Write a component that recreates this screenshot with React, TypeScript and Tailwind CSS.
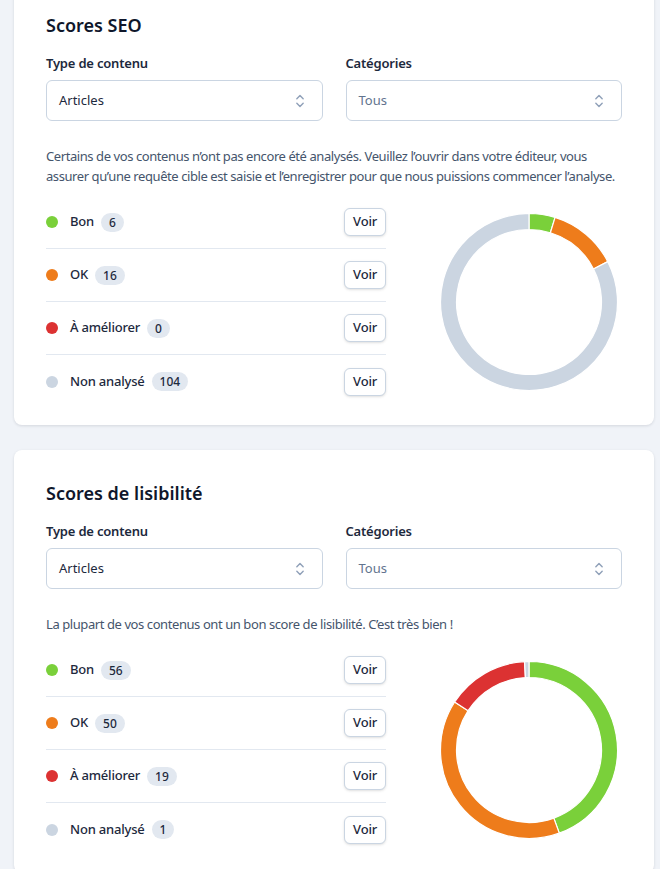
import React from "react";

type Row = { label: string; count: number; color: string };

const GREEN = "#7ad03a";
const ORANGE = "#ee7c1b";
const RED = "#dc3232";
const GRAY = "#cbd5e1";

function polar(cx: number, cy: number, r: number, deg: number) {
  const a = ((deg - 90) * Math.PI) / 180;
  return [cx + r * Math.cos(a), cy + r * Math.sin(a)];
}

function wedge(cx: number, cy: number, ro: number, ri: number, a0: number, a1: number) {
  const large = a1 - a0 > 180 ? 1 : 0;
  const [x0, y0] = polar(cx, cy, ro, a0);
  const [x1, y1] = polar(cx, cy, ro, a1);
  const [x2, y2] = polar(cx, cy, ri, a1);
  const [x3, y3] = polar(cx, cy, ri, a0);
  return `M${x0} ${y0} A${ro} ${ro} 0 ${large} 1 ${x1} ${y1} L${x2} ${y2} A${ri} ${ri} 0 ${large} 0 ${x3} ${y3} Z`;
}

function Donut({ rows }: { rows: Row[] }) {
  const total = rows.reduce((s, r) => s + r.count, 0);
  let start = 0;
  const size = 178;
  const c = size / 2;
  return (
    <svg width={size} height={size} viewBox={`0 0 ${size} ${size}`}>
      {rows.map((r) => {
        if (r.count === 0) return null;
        const sweep = (r.count / total) * 360;
        const a0 = start;
        const a1 = start + sweep;
        start = a1;
        return (
          <path
            key={r.label}
            d={wedge(c, c, 88.5, 72.5, a0, a1)}
            fill={r.color}
            stroke="#ffffff"
            strokeWidth={1.2}
          />
        );
      })}
    </svg>
  );
}

function UpDown() {
  return (
    <svg width="18" height="20" viewBox="0 0 20 20" fill="none" className="text-slate-400">
      <path
        d="M6.5 7.5L10 4l3.5 3.5M6.5 12.5L10 16l3.5-3.5"
        stroke="currentColor"
        strokeWidth="1.6"
        strokeLinecap="round"
        strokeLinejoin="round"
      />
    </svg>
  );
}

function SelectBox({ label, value, muted }: { label: string; value: string; muted?: boolean }) {
  return (
    <div className="flex flex-col">
      <span className="text-[13px] font-semibold text-slate-800 leading-5 mb-[7px] tracking-[-0.2px]">{label}</span>
      <div className="h-[41px] rounded-md border border-slate-300 bg-white flex items-center justify-between pl-3 pr-[13px]">
        <span className={`text-[13px] ${muted ? "text-slate-500" : "text-slate-800"}`}>{value}</span>
        <UpDown />
      </div>
    </div>
  );
}

function ScoreCard({ title, text, rows }: { title: string; text: string; rows: Row[] }) {
  return (
    <section className="bg-white rounded-lg shadow-[0_1px_3px_rgba(15,23,42,0.12)] px-8 pt-[31px] pb-[17px]">
      <h2 className="text-[18px] font-semibold text-slate-900 leading-6">{title}</h2>
      <div className="grid grid-cols-2 gap-[23px] mt-[16px]">
        <SelectBox label="Type de contenu" value="Articles" />
        <SelectBox label="Catégories" value="Tous" muted />
      </div>
      <p className="mt-[25px] text-[13px] leading-5 text-slate-600 tracking-[-0.42px]">{text}</p>
      <div className="flex items-center mt-[10px]">
        <ul className="w-[340px]">
          {rows.map((r, i) => (
            <li
              key={r.label}
              className={`flex items-center h-[53px] ${i < rows.length - 1 ? "border-b border-slate-200" : ""}`}
            >
              <span className="w-3 h-3 rounded-full shrink-0" style={{ backgroundColor: r.color }} />
              <span className="ml-3 text-[13px] font-medium text-slate-800 tracking-[-0.2px]">{r.label}</span>
              <span className="ml-[7px] px-2 rounded-full bg-slate-200 text-[12px] font-medium text-slate-800 leading-[19px]">
                {r.count}
              </span>
              <button className="ml-auto h-[28px] px-[8px] rounded-md border border-slate-300 bg-white text-[13px] font-medium text-slate-800 shadow-sm tracking-[-0.2px]">
                Voir
              </button>
            </li>
          ))}
        </ul>
        <div className="ml-[54px]">
          <Donut rows={rows} />
        </div>
      </div>
    </section>
  );
}

export default function App() {
  const seo: Row[] = [
    { label: "Bon", count: 6, color: GREEN },
    { label: "OK", count: 16, color: ORANGE },
    { label: "À améliorer", count: 0, color: RED },
    { label: "Non analysé", count: 104, color: GRAY },
  ];
  const read: Row[] = [
    { label: "Bon", count: 56, color: GREEN },
    { label: "OK", count: 50, color: ORANGE },
    { label: "À améliorer", count: 19, color: RED },
    { label: "Non analysé", count: 1, color: GRAY },
  ];
  return (
    <div
      className="min-h-screen bg-[#f0f3f8] pl-[14px] pr-[6px] overflow-hidden"
      style={{ fontFamily: '"Noto Sans", "Open Sans", sans-serif' }}
    >
      <div className="flex flex-col gap-[25px] -mt-[18px]">
        <ScoreCard
          title="Scores SEO"
          text="Certains de vos contenus n’ont pas encore été analysés. Veuillez l’ouvrir dans votre éditeur, vous assurer qu’une requête cible est saisie et l’enregistrer pour que nous puissions commencer l’analyse."
          rows={seo}
        />
        <ScoreCard
          title="Scores de lisibilité"
          text="La plupart de vos contenus ont un bon score de lisibilité. C’est très bien !"
          rows={read}
        />
      </div>
    </div>
  );
}
